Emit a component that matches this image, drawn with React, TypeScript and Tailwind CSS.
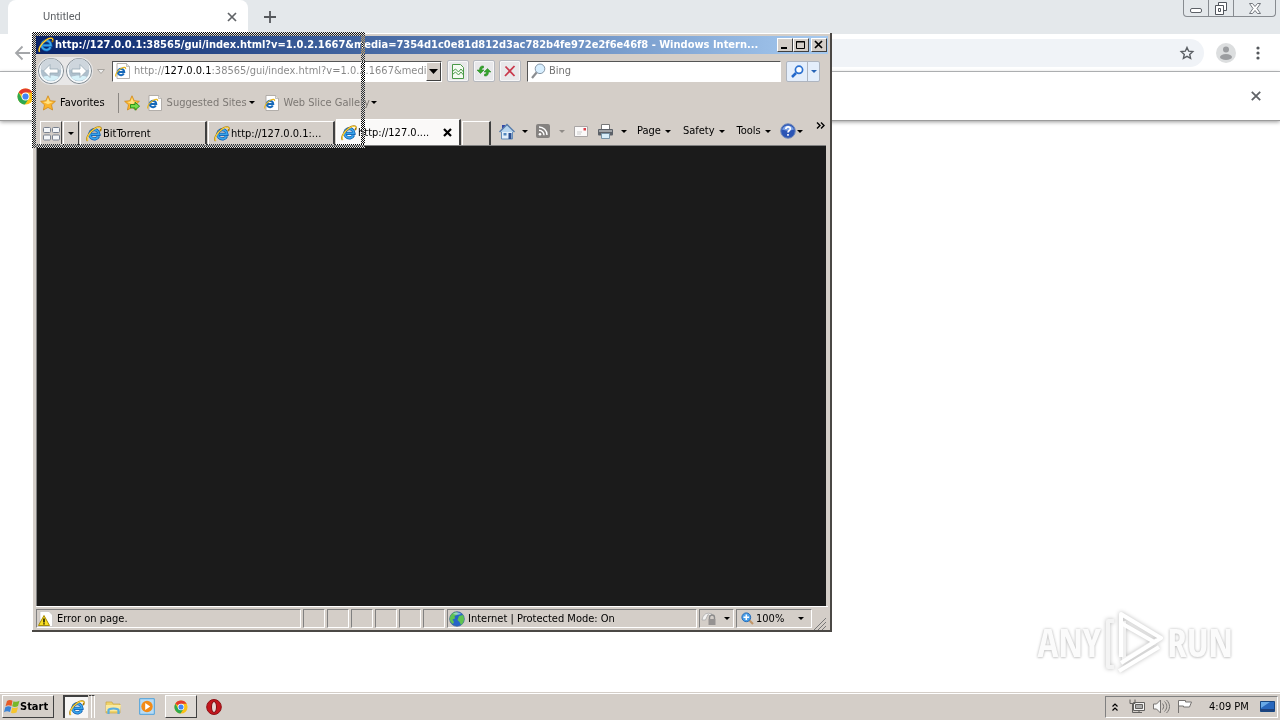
import type { ReactNode } from "react";

const sunken = "border border-[#808080] border-r-white border-b-white";
const raised = "border border-white border-r-[#404040] border-b-[#404040]";

function IeLogo({ className = "size-4" }: { className?: string }) {
  return (
    <svg viewBox="0 0 16 16" className={className} aria-hidden="true">
      <path d="M12.6 10.2A4.6 4.6 0 1 1 13 8.4H5.2" fill="none" stroke="#0b57ac" strokeWidth="3.2" />
      <path d="M12.5 10.2A4.6 4.6 0 1 1 12.9 8.4H5.2" fill="none" stroke="#3aa5ea" strokeWidth="1.8" />
      <path d="M1.6 15C-.5 12.5 3 6.500 8 3c3.500-2.500 7-2.800 6.900-.2-.1.9-.4 1.700-.8 2.400" fill="none" stroke="#a87808" strokeWidth="1.700" />
      <path d="M1.800 14.700C-.1 12.300 3.200 6.500 8.200 3.100c3.300-2.200 6.500-2.500 6.400-.2" fill="none" stroke="#fbd545" strokeWidth="1.100" />
    </svg>
  );
}

function IePage({ className = "size-4" }: { className?: string }) {
  return (
    <svg viewBox="0 0 16 16" className={className} aria-hidden="true">
      <path d="M2 .5h9.500l3 3v12H2z" fill="#fff" stroke="#a3a09b" strokeWidth=".8" />
      <path d="M11.500.5v3h3" fill="#e7e5e1" stroke="#a3a09b" strokeWidth=".6" />
      <path d="M8.800 10.600A3.200 3.200 0 1 1 9.200 9H3.600" fill="none" stroke="#1769b9" strokeWidth="2.100" />
      <path d="M.9 13.500C-.2 11.500 3 7 6.500 5.200 9 3.900 11 4 10.500 6" fill="none" stroke="#e8b721" strokeWidth="1.200" />
    </svg>
  );
}

function ChromeLogo({ className = "size-4" }: { className?: string }) {
  return (
    <svg viewBox="0 0 16 16" className={className} aria-hidden="true">
      <circle cx="8" cy="8" r="7.500" fill="#fbc116" />
      <path d="M8 8 1.500 4.200A7.500 7.500 0 0 1 14.500 4.300H8z" fill="#e33b2e" />
      <path d="M1.500 4.200A7.500 7.500 0 0 0 7.400 15.500L11.200 9.800 8 8 4.700 9.700z" fill="#2da94f" />
      <circle cx="8" cy="8" r="3.700" fill="#fff" />
      <circle cx="8" cy="8" r="2.900" fill="#4285f4" />
    </svg>
  );
}

function Star({ add = false }: { add?: boolean }) {
  return (
    <svg viewBox="0 0 16 16" className="size-4 shrink-0" aria-hidden="true">
      <path d="M8 .8l2.200 4.900 5.200.6-3.900 3.500 1.100 5.200L8 12.400 3.400 15l1.100-5.200L.6 6.300l5.200-.6z" fill="#fcb52c" stroke="#d08a1c" strokeWidth=".8" />
      <path d="M8 2.800l1.500 3.700 3.500.5-5 2.200-4.800-2.200 3.300-.5z" fill="#ffe184" />
      {add && <path d="M6.500 9.500h4.500V7.200l4.600 4-4.600 4V12.900H6.500z" fill="#76dc48" stroke="#218b18" strokeWidth=".9" />}
    </svg>
  );
}

function Caret({ className = "text-black" }: { className?: string }) {
  return (
    <svg viewBox="0 0 6 3" className={"h-[3px] w-[6px] shrink-0 " + className} aria-hidden="true">
      <path d="M0 0h6L3 3z" fill="currentColor" />
    </svg>
  );
}

function NavArrow({ label, back = false }: { label: string; back?: boolean }) {
  return (
    <button type="button" aria-label={label} className="size-7 shrink-0">
      <svg viewBox="0 0 28 28" className="size-7">
        <circle cx="14" cy="14" r="12.500" fill="#e3e8ec" stroke="#7f888f" />
        <circle cx="14" cy="14" r="11" fill="#aebfcc" stroke="#f7fafb" strokeWidth="1.500" />
        <path d="M3.500 12a10.500 10.500 0 0 1 21 0c-6 3-15 3-21 0z" fill="#ced6dd" />
        <path d="M6 20c4 5 12 5 16 0-4-2-12-2-16 0z" fill="#d6f1f9" />
        <path
          d={back ? "M13 7.500 6.500 14l6.500 6.500v-4.500h8v-4h-8z" : "M15 7.500l6.500 6.500-6.500 6.500v-4.500H7v-4h8z"}
          fill="#fff"
          stroke="#98a9b5"
          strokeWidth=".8"
        />
      </svg>
    </button>
  );
}

function ToolButton({ label, children }: { label: string; children: ReactNode }) {
  return (
    <button type="button" aria-label={label} className="flex size-[22px] shrink-0 items-center justify-center rounded-xs border border-[#b5b8be] bg-[#e8e8ea] shadow-[inset_0_0_0_1px_#f7f7f8]">
      {children}
    </button>
  );
}

function CaptionButton({ label, children }: { label: string; children: ReactNode }) {
  return (
    <button type="button" aria-label={label} className={"flex h-[14px] w-4 items-center justify-center bg-[#d4cec8] " + raised}>
      <svg viewBox="0 0 12 10" className="h-[10px] w-3" fill="none" stroke="#000">
        {children}
      </svg>
    </button>
  );
}

function Tab({ title, active = false }: { title: string; active?: boolean }) {
  return (
    <div
      role="tab"
      aria-selected={active}
      className={
        "flex shrink-0 items-center border-t border-l border-r-2 border-t-white border-l-white border-r-[#404040] " +
        (active ? "h-[26px] w-[125px] bg-[#faf9f8] pl-1" : "h-6 w-[127px] bg-[#d4cec8] pl-[5px]")
      }
    >
      <IeLogo className="size-4 shrink-0" />
      <span className="grow pl-px">{title}</span>
      {active && (
        <button type="button" aria-label="Close tab" className="mr-[7px]">
          <svg viewBox="0 0 9 9" className="size-[9px]">
            <path d="M1 1l7 7M8 1 1 8" stroke="#000" strokeWidth="2.200" />
          </svg>
        </button>
      )}
    </div>
  );
}

function Frame() {
  const dots = "bg-[repeating-conic-gradient(#fff_0_25%,transparent_0_50%)] bg-[length:2px_2px]";
  return (
    <div className="pointer-events-none absolute top-8 left-8 flex h-[116px] w-[333px] flex-col mix-blend-difference">
      <div className={"h-1 " + dots} />
      <div className="flex grow justify-between">
        <div className={"w-1 " + dots} />
        <div className={"w-1 " + dots} />
      </div>
      <div className={"h-1 " + dots} />
    </div>
  );
}

function Browser() {
  return (
    <div className="flex grow flex-col bg-white">
      <div className="flex h-[34px] items-end justify-between bg-[#e4e8eb] pl-2">
        <div className="flex h-[34px] items-center">
          <div className="flex h-full w-60 items-center justify-between rounded-t-lg bg-white pr-[11px] pl-[35px] text-[#606367]">
            <span className="font-['Roboto',sans-serif] text-[11px]">Untitled</span>
            <button type="button" aria-label="Close">
              <svg viewBox="0 0 10 10" className="size-[10px]"><path d="M1 1l8 8M9 1 1 9" stroke="#606367" strokeWidth="1.700" /></svg>
            </button>
          </div>
          <button type="button" aria-label="New tab" className="ml-4">
            <svg viewBox="0 0 12 12" className="size-3"><path d="M6 0v12M0 6h12" stroke="#55585c" strokeWidth="1.800" /></svg>
          </button>
        </div>
        <div className="mr-1 flex h-[17px] self-start rounded-b-sm border border-t-0 border-[#878b90]">
          <button type="button" aria-label="Minimize" className="flex w-[25px] items-end justify-center border-r border-[#878b90] pb-[3px]">
            <svg viewBox="0 0 12 5" className="h-[5px] w-3"><rect x=".5" y=".5" width="11" height="4" rx="1.500" fill="#fff" stroke="#5d6167" /></svg>
          </button>
          <button type="button" aria-label="Restore" className="flex w-[25px] items-center justify-center border-r border-[#878b90]">
            <svg viewBox="0 0 14 13" className="h-[13px] w-[14px]" fill="#fff" stroke="#50555c"><path d="M4.500.5h8v8h-8z" /><path d="M1.500 3.500h8v9h-8z" /><path d="M4.500 6.500h2v3h-2z" /></svg>
          </button>
          <button type="button" aria-label="Close window" className="flex w-[41px] items-center justify-center">
            <svg viewBox="0 0 12 11" className="h-[11px] w-3"><path d="M.5.500h3l2.500 3 2.500-3h3L8 5.500l3.500 5h-3L6 7.500l-2.500 3h-3L4 5.500z" fill="#fff" stroke="#656a70" strokeWidth=".9" /></svg>
          </button>
        </div>
      </div>
      <div className="flex h-[38px] items-center border-b border-[#b2b4b7] pr-[14px] pl-[14px]">
        <button type="button" aria-label="Back" className="mr-4">
          <svg viewBox="0 0 16 16" className="size-4" fill="none" stroke="#a4a6a9" strokeWidth="1.800"><path d="M16 8H2M8.500 1.500 2 8l6.500 6.500" /></svg>
        </button>
        <div className="flex h-7 grow items-center justify-end rounded-full bg-[#f0f3f7] pr-[9px]">
          <button type="button" aria-label="Bookmark this tab">
            <svg viewBox="0 0 16 16" className="size-4" fill="none" stroke="#5b5f64" strokeWidth="1.400"><path d="M8 2.500l1.700 3.700 4.100.4-3.100 2.800.9 4L8 11.400l-3.600 2 .9-4-3.100-2.800 4.100-.4z" /></svg>
          </button>
        </div>
        <button type="button" aria-label="Profile" className="ml-3">
          <svg viewBox="0 0 20 20" className="size-5"><circle cx="10" cy="10" r="10" fill="#dcdedf" /><circle cx="10" cy="6.500" r="3" fill="#9b9da0" /><ellipse cx="10" cy="14" rx="6" ry="3" fill="#9b9da0" /></svg>
        </button>
        <button type="button" aria-label="Menu" className="ml-[14px]">
          <svg viewBox="0 0 16 16" className="size-4" fill="#55585c"><circle cx="8" cy="3" r="1.600" /><circle cx="8" cy="8" r="1.600" /><circle cx="8" cy="13" r="1.600" /></svg>
        </button>
      </div>
      <div className="flex h-[49px] items-center justify-between border-b border-[#9b9b9b] pr-[19px] pl-[17px] shadow-[0_1px_4px_#999]">
        <ChromeLogo className="size-[17px]" />
        <button type="button" aria-label="Dismiss">
          <svg viewBox="0 0 10 10" className="size-[10px]"><path d="M.8.8l8.400 8.400M9.200.8.8 9.200" stroke="#606367" strokeWidth="1.800" /></svg>
        </button>
      </div>
    </div>
  );
}

function Menu({ label, className = "" }: { label: string; className?: string }) {
  return (
    <button type="button" className={"flex items-center gap-1 " + className}>
      {label}
      <Caret />
    </button>
  );
}

function Explorer() {
  return (
    <section className="absolute top-[33px] left-8 flex h-[599px] w-[800px] flex-col border-r-2 border-b-2 border-[#4b4845] bg-[#d4cec8] pt-[3px] pr-[2px] pl-1 shadow-[inset_1px_1px_0_#fff]">
      <header className="flex h-[18px] shrink-0 items-center bg-linear-to-r from-[#0a246a] to-[#a6caf0] pr-px pl-[2px] text-white">
        <IeLogo className="size-4 shrink-0" />
        <h1 className="min-w-0 grow truncate pl-px text-[11px] leading-[18px] font-bold">
          http://127.0.0.1:38565/gui/index.html?v=1.0.2.1667&amp;media=7354d1c0e81d812d3ac782b4fe972e2f6e46f8 - Windows Intern...
        </h1>
        <div className="flex shrink-0 pl-1">
          <CaptionButton label="Minimize"><path d="M2 8h6" strokeWidth="2" /></CaptionButton>
          <CaptionButton label="Maximize"><path d="M1.500 1.500h8v7h-8zM1 2h9" /></CaptionButton>
          <div className="w-[2px]" />
          <CaptionButton label="Close"><path d="M2 1l7 7M9 1 2 8" strokeWidth="1.700" /></CaptionButton>
        </div>
      </header>

      <div className="flex h-[34px] shrink-0 items-center pl-px">
        <div className="flex rounded-full bg-[#e8e7e7]">
          <NavArrow label="Back" back />
          <NavArrow label="Forward" />
        </div>
        <button type="button" aria-label="Recent pages" className="mx-[3px] flex h-4 w-[10px] items-center justify-center">
          <svg viewBox="0 0 8 5" className="h-[5px] w-2"><path d="M.5.500h7L4 4.500z" fill="#eee" stroke="#aaa6a1" /></svg>
        </button>
        <div className="ml-[3px] flex h-[21px] w-[330px] items-center border border-[#555] border-r-white border-b-white bg-white pl-[2px]">
          <IePage className="size-4 shrink-0" />
          <input
            aria-label="Address"
            defaultValue="http://127.0.0.1:38565/gui/index.html?v=1.0.2.1667&medi"
            className="ml-[3px] min-w-0 grow bg-[linear-gradient(to_right,#858585_30px,#000_30px,#000_78px,#858585_78px)] bg-clip-text text-transparent outline-none"
          />
          <button type="button" aria-label="Show addresses" className={"flex h-[19px] w-[15px] items-center justify-center bg-[#d4cec8] " + raised}>
            <svg viewBox="0 0 9 5" className="h-[5px] w-[9px]"><path d="M0 0h9L4.500 5z" /></svg>
          </button>
        </div>
        <div className="flex gap-1 pl-[5px]">
          <ToolButton label="Compatibility view">
            <svg viewBox="0 0 14 15" className="h-[15px] w-[14px]" fill="#f4fbf2" stroke="#4a9948"><path d="M1.500.5h8l3 3v11h-11z" /><path d="M1.500 7.500 4.500 5l3 3 2.500-3 2.500 3M1.500 10.500l3-2.500 3 3L10 8l2.500 3" fill="none" /></svg>
          </ToolButton>
          <ToolButton label="Refresh">
            <svg viewBox="0 0 16 14" className="h-[14px] w-4" fill="#35a52d" stroke="#23811f" strokeWidth=".5"><path d="M7.500 2C5 1.500 3.500 3 3.500 6H1l3.500 3.500L8 6H5.700c0-1.500.5-2.200 1.800-2z" /><path d="M8.500 12c2.500.5 4-1 4-4H15l-3.500-3.500L8 8h2.300c0 1.500-.5 2.200-1.800 2z" /></svg>
          </ToolButton>
          <ToolButton label="Stop">
            <svg viewBox="0 0 12 12" className="size-3"><path d="M1.500 1.500l9 9.500M10.500 1 1 11" stroke="#c9394c" strokeWidth="1.800" /></svg>
          </ToolButton>
        </div>
        <div className="ml-[6px] flex h-[21px] w-[254px] items-center border border-[#555] border-r-white border-b-white bg-white pl-[3px]">
          <svg viewBox="0 0 15 16" className="h-4 w-[15px] shrink-0"><path d="M1 15l5-6" stroke="#8b8d90" strokeWidth="2.200" /><circle cx="9" cy="5.800" r="4.800" fill="#d8efff" stroke="#8697a8" /></svg>
          <input aria-label="Search" placeholder="Bing" className="ml-[3px] min-w-0 grow outline-none placeholder:text-[#737373]" />
        </div>
        <div className="ml-[5px] flex h-[21px] w-[34px] rounded-xs border border-[#aeb5c0] bg-[#e4eefb]">
          <button type="button" aria-label="Go" className="flex w-[21px] items-center justify-center border-r border-[#aeb5c0]">
            <svg viewBox="0 0 13 13" className="size-[13px]" fill="none"><path d="M1 12l4-4" stroke="#2468cb" strokeWidth="2.500" /><circle cx="8" cy="4.800" r="3.600" fill="#fff" stroke="#2b70d0" strokeWidth="1.700" /></svg>
          </button>
          <button type="button" aria-label="Search options" className="flex grow items-center justify-center"><Caret className="text-[#2864b6]" /></button>
        </div>
      </div>

      <div className="flex h-[29px] shrink-0 items-center pl-1">
        <button type="button" className="flex items-center gap-1"><Star />Favorites</button>
        <div className="mr-[5px] ml-[13px] h-5 w-px bg-[#8b8783]" />
        <button type="button" aria-label="Add to favorites"><Star add /></button>
        <button type="button" className="ml-[7px] flex items-center gap-1 text-[#7c7874]"><IePage /><span className="w-[78px] text-left whitespace-nowrap">Suggested Sites</span><Caret /></button>
        <button type="button" className="ml-[9px] flex items-center gap-1 text-[#7c7874]"><IePage /><span className="w-[83px] text-left whitespace-nowrap">Web Slice Gallery</span><Caret /></button>
      </div>

      <div className="flex h-[28px] shrink-0 items-end pl-1">
        <button type="button" aria-label="Quick tabs" className={"mr-px flex h-6 w-[22px] items-center justify-center border-b-0 " + raised}>
          <svg viewBox="0 0 17 14" className="h-[14px] w-[17px]" fill="#f4f6f9" stroke="#78808e"><rect x=".5" y=".5" width="7" height="5" rx="1" /><rect x="9.500" y=".5" width="7" height="5" rx="1" /><rect x=".5" y="8" width="7" height="5" rx="1" /><rect x="9.500" y="8" width="7" height="5" rx="1" /></svg>
        </button>
        <button type="button" aria-label="Tab list" className={"mr-px flex h-6 w-4 items-center justify-center border-b-0 " + raised}><Caret /></button>
        <div role="tablist" className="flex items-end gap-px">
          <Tab title="BitTorrent" />
          <Tab title="http://127.0.0.1:..." />
          <Tab title="http://127.0...." active />
        </div>
        <button type="button" aria-label="New tab" className="ml-px h-6 w-[29px] border-t border-l border-r-2 border-t-white border-l-white border-r-[#404040]" />
        <nav className="flex h-[28px] grow items-center pl-2">
          <button type="button" aria-label="Home" className="flex items-center gap-[7px]">
            <svg viewBox="0 0 16 17" className="h-[17px] w-4"><path d="M3 2h3v4H3z" fill="#3348a8" /><path d="M2.500 8h11v8h-11z" fill="#e3eff9" stroke="#648db8" /><path d="M.5 9 8 1.500 15.500 9" fill="#b7d5ee" stroke="#587dab" strokeWidth="1.500" /><path d="M9.500 10h3v6h-3z" fill="#284e91" /><path d="M4.500 10h3v2.500h-3z" fill="#5287bd" /></svg>
            <Caret />
          </button>
          <button type="button" aria-label="Feeds" className="ml-2 flex items-center gap-[9px]">
            <svg viewBox="0 0 14 14" className="size-[14px]"><rect width="14" height="14" rx="2" fill="#858280" /><circle cx="4" cy="10.200" r="1.300" fill="#fff" /><path d="M3 6.200a5 5 0 0 1 5 5M3 3a8 8 0 0 1 8 8" fill="none" stroke="#fff" strokeWidth="1.400" /></svg>
            <Caret className="text-[#8f8b87]" />
          </button>
          <button type="button" aria-label="Read mail" className="ml-[9px]">
            <svg viewBox="0 0 14 11" className="h-[11px] w-[14px]"><path d="M.5.500h13v10H.5z" fill="#fbfafa" stroke="#a9a5a5" /><path d="M9.500 2h2.500v2.500H9.500z" fill="#d9404b" /><path d="M3 6h5M3 8h4" stroke="#ccc" /></svg>
          </button>
          <button type="button" aria-label="Print" className="ml-[9px] flex items-center gap-[7px]">
            <svg viewBox="0 0 17 15" className="h-[15px] w-[17px]"><path d="M4.500.5h8v5h-8z" fill="#fff" stroke="#777" /><rect x="1" y="5" width="15" height="6.500" rx="1" fill="#5c6168" /><path d="M2 6h13v2H2z" fill="#a0a4a8" /><path d="M4.500 9.500h8v5h-8z" fill="#d8eefa" stroke="#7793a6" /></svg>
            <Caret />
          </button>
          <Menu label="Page" className="ml-[10px]" />
          <Menu label="Safety" className="ml-3" />
          <Menu label="Tools" className="ml-3" />
          <button type="button" aria-label="Help" className="ml-[9px] flex items-center gap-px">
            <svg viewBox="0 0 16 16" className="size-4"><circle cx="8" cy="8" r="7.300" fill="#2b55b5" stroke="#758dbb" /><path d="M2 6.500C4 1 12 1 14 6.500 10 8 6 8 2 6.500z" fill="#7da2e5" /><path d="M5.800 6C6 3 10.500 3.300 10.300 6 10.100 7.600 8 7.500 8 9.500M8 11v1.800" fill="none" stroke="#fff" strokeWidth="1.700" /></svg>
            <Caret />
          </button>
          <button type="button" aria-label="More commands" className="mb-3 ml-auto mr-[3px]">
            <svg viewBox="0 0 9 7" className="h-[7px] w-[9px]" fill="none" stroke="#000" strokeWidth="1.400"><path d="M1 .5l3 3-3 3M5 .5l3 3-3 3" /></svg>
          </button>
        </nav>
      </div>

      <main className="mr-[2px] grow border-t border-l border-[#808080] bg-[#1b1b1b]" />

      <footer className="flex h-6 shrink-0 items-center gap-[2px] border-t border-white">
        <div className={"flex h-[19px] w-[265px] items-center gap-[3px] pl-px " + sunken}>
          <svg viewBox="0 0 16 16" className="size-4"><path d="M2 .5h9l3.500 3.500v11.500H2z" fill="#fff" stroke="#bbb" strokeWidth=".6" /><path d="M6 4.500 11.500 14.500H.5z" fill="#f9df22" stroke="#a98d08" /><path d="M6 7.500v4M6 12.300v1.200" stroke="#000" strokeWidth="1.400" /></svg>
          Error on page.
        </div>
        {[0, 1, 2, 3, 4, 5].map((n) => <div key={n} className={"h-[19px] w-[22px] " + sunken} />)}
        <div className={"flex h-[19px] grow items-center gap-[3px] pl-px " + sunken}>
          <svg viewBox="0 0 16 16" className="size-4"><circle cx="8" cy="8" r="7.300" fill="#2765c8" stroke="#42659b" strokeWidth=".8" /><path d="M2 4C4 1 8 0 9 2L8 4 5.500 5 6 7.500 3.500 8.500 5 11l-1 2C0 10 0 7 2 4zM10 5l4-1c2 4 1 8-2 10l-1.500-3L8.500 9z" fill="#5fc351" /><path d="M4 3c2-2 6-2 8 0-2 1-6 1-8 0z" fill="#b2dcf4" opacity=".7" /></svg>
          Internet | Protected Mode: On
        </div>
        <button type="button" aria-label="Privacy report" className={"flex h-[19px] w-[35px] items-center gap-[6px] pl-px " + sunken}>
          <svg viewBox="0 0 17 15" className="h-[15px] w-[17px]"><path d="M1 9c1-6 5-8 10-6l-1.500 2L7 3.500 4.500 9z" fill="#f4f3f2" stroke="#aaa" strokeWidth=".8" /><path d="M8.500 8V6.500a2.500 2.500 0 0 1 5 0V8" fill="none" stroke="#8b8b8b" strokeWidth="1.400" /><rect x="7.500" y="8" width="7" height="6" fill="#959291" /></svg>
          <Caret />
        </button>
        <button type="button" className={"flex h-[19px] w-[76px] items-center pl-1 " + sunken}>
          <svg viewBox="0 0 13 13" className="mr-[2px] size-[13px]"><path d="M8 8l4 4" stroke="#c09668" strokeWidth="2.200" /><circle cx="5.300" cy="5.300" r="4.400" fill="#4aa0eb" stroke="#286db7" /><path d="M5.300 2.500v5.600M2.500 5.300h5.600" stroke="#fff" strokeWidth="1.500" /></svg>
          <span className="w-[42px] text-left">100%</span>
          <Caret />
        </button>
        <svg viewBox="0 0 12 12" className="mr-[2px] size-3 shrink-0 self-end" stroke="#777"><path d="M0 12 12 0M4 12l8-8M8 12l4-4" /></svg>
      </footer>
    </section>
  );
}

function Watermark() {
  return (
    <div className="absolute right-[47px] bottom-[45px] flex items-center font-['Liberation_Sans_Narrow','Open_Sans_Condensed','Roboto',sans-serif] text-[39px] leading-[66px] text-[#fbfbfb] [text-shadow:0_0_3px_#bbb,0_1px_2px_#ddd]">
      <span>ANY</span>
      <svg viewBox="0 0 66 66" className="h-[66px] w-[66px] drop-shadow-[0_0_2px_#bbb]" fill="none" stroke="#fff" strokeWidth="4" strokeLinejoin="round">
        <path d="M23 12v39l33-20" stroke="#f0f0f0" />
        <path d="M13 12H7v46h6" stroke="#f4f4f4" />
        <path d="M20 48V5l40 24-40 25M20 14l35 20M18 62l40-24" />
      </svg>
      <span>RUN</span>
    </div>
  );
}

function Taskbar() {
  return (
    <footer className="relative flex h-7 shrink-0 items-center border-t border-[#d4cec8] bg-[#d4cec8] pl-[2px] shadow-[inset_0_1px_0_#fff]">
      <button type="button" className={"flex h-[23px] w-[52px] items-center pl-px text-[11px] font-bold " + raised}>
        <svg viewBox="0 0 16 15" className="h-[15px] w-4 shrink-0"><path d="M3 2c2-1.500 4-1 5.500-.2L7.500 7C5.500 6 3.500 6 1.500 7.200z" fill="#e65b27" /><path d="M9.500 2.200c2 .8 4 .7 6-.5L14 7c-2 1.200-4 1.200-5.800.3z" fill="#77b82b" /><path d="M1.300 8.200c2-1 4-1.200 6-.2L6 13C4 12 2 12 0 13.200z" fill="#3a83d6" /><path d="M8.200 8.500c2 .8 4 .7 5.800-.3l-1.500 5.300c-2 1-4 1-5.500.2z" fill="#f6c52d" /></svg>
        Start
      </button>
      <div className="ml-[9px] flex h-[23px]">
        <button type="button" aria-label="Internet Explorer" className="flex w-[25px] items-center justify-center border-t-2 border-l-2 border-[#404040] bg-[#f7f6f5]"><IeLogo className="size-4" /></button>
        <div className="ml-px w-[3px] border-t border-r border-t-[#404040] border-r-white" />
        <div className="w-[3px] border-t border-r border-t-[#404040] border-r-white" />
      </div>
      <button type="button" aria-label="Windows Explorer" className="ml-[10px]">
        <svg viewBox="0 0 17 16" className="h-4 w-[17px]"><path d="M1 3h6l1 2h7v9H1z" fill="#efd36a" stroke="#c8a344" strokeWidth=".7" /><path d="M1 6h15l-1 6H1z" fill="#fae99e" /><path d="M3.500 15V11c0-2 10-2 10 0v4" fill="none" stroke="#58aee1" strokeWidth="2.200" /></svg>
      </button>
      <button type="button" aria-label="Media Player" className="ml-[17px]">
        <svg viewBox="0 0 16 17" className="h-[17px] w-4"><path d="M.7.700h14.600v15.600H.7z" fill="#b8dcf5" stroke="#4ca0dc" /><circle cx="8" cy="8.500" r="5.700" fill="#f28b17" /><path d="M6.200 5v7l5-3.500z" fill="#fff" /></svg>
      </button>
      <button type="button" aria-label="Chrome" className={"ml-[10px] flex h-[23px] w-8 items-center justify-center bg-[#dedad5] " + raised}><ChromeLogo className="size-[14px]" /></button>
      <button type="button" aria-label="Opera" className="ml-[9px]">
        <svg viewBox="0 0 16 16" className="size-4"><ellipse cx="8" cy="8" rx="7.300" ry="7.500" fill="#c5161d" stroke="#8d1015" /><ellipse cx="8" cy="8" rx="2.500" ry="5.500" fill="#e7d8d5" stroke="#7c0c10" /></svg>
      </button>
      <div className={"mr-[2px] ml-auto flex h-[22px] items-center pr-[2px] pl-[6px] " + sunken}>
        <svg viewBox="0 0 6 8" className="h-2 w-[6px]" fill="none" stroke="#000" strokeWidth="1.200"><path d="M.5 3.500 3 1l2.500 2.500M.5 7.500 3 5l2.500 2.500" /></svg>
        <svg viewBox="0 0 16 15" className="ml-[11px] h-[15px] w-4" fill="#f3f3f3" stroke="#62605e"><path d="M4.500 3.500h11v8h-11z" /><path d="M6.500 5.500h7v4h-7z" fill="#aaa" /><path d="M1 .5v4h5v-4M3.500 4.500v9H13M10 11.500v2" fill="none" /></svg>
        <svg viewBox="0 0 17 15" className="ml-2 h-[15px] w-[17px]" fill="none" stroke="#777472"><path d="M.5 5h3L7.500 1v13l-4-4h-3z" fill="#f8f8f8" /><path d="M9.500 4.500c1.500 2 1.500 4 0 6M11.500 2.500c3 3 3 7 0 10M13.500 1c4 4 4 9 0 13" /></svg>
        <svg viewBox="0 0 16 15" className="ml-[7px] h-[15px] w-4" fill="#fff" stroke="#777472"><path d="M1.500 14V1.500h7V3h6l-2 5h-6V7H1.500" /></svg>
        <time className="mr-[11px] ml-4 w-10 whitespace-nowrap">4:09 PM</time>
        <svg viewBox="0 0 15 12" className="h-3 w-[15px]"><path d="M.5.500h14v10H.5z" fill="#2867bd" stroke="#174681" /><path d="M1 1h9L1 7z" fill="#68a9e7" /><path d="M1 9h13" stroke="#1d417c" strokeWidth="2" /></svg>
      </div>
    </footer>
  );
}

export default function App() {
  return (
    <div className="relative flex min-h-screen flex-col overflow-hidden bg-white font-['DejaVu_Sans_Condensed','DejaVu_Sans',sans-serif] text-[11px] leading-4 text-black">
      <Browser />
      <Explorer />
      <Frame />
      <Watermark />
      <Taskbar />
    </div>
  );
}
